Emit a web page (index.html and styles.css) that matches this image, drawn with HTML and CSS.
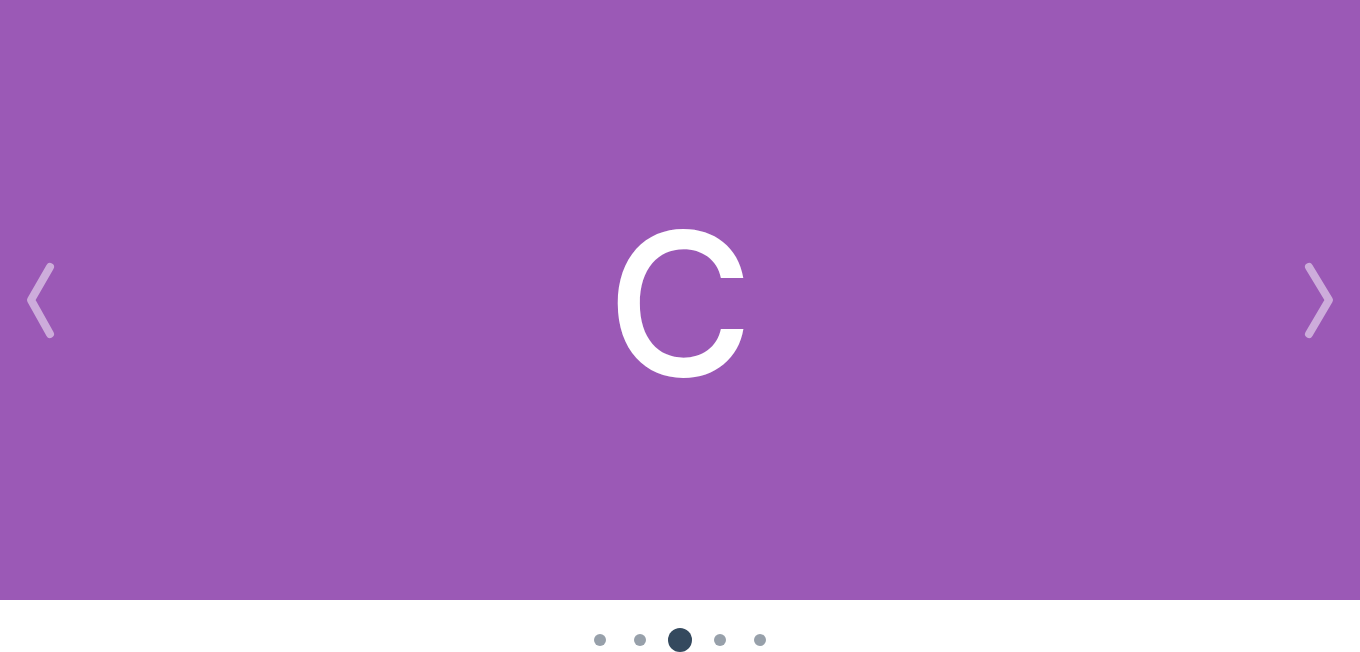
FILE: index.html
```html
<!DOCTYPE html>
<html>
<head>
<meta charset="utf-8">
<link rel="stylesheet" href="styles.css">
</head>
<body>
<div class="carousel">
  <div class="slide">
    <span class="letter">C</span>
    <button class="arrow arrow-prev" aria-label="Previous">
      <svg width="40" height="90" viewBox="0 0 40 90"><polyline points="30,12 11,45 30,79" fill="none" stroke="currentColor" stroke-width="8" stroke-linecap="round" stroke-linejoin="round"/></svg>
    </button>
    <button class="arrow arrow-next" aria-label="Next">
      <svg width="40" height="90" viewBox="0 0 40 90"><polyline points="9,12 29,45 9,79" fill="none" stroke="currentColor" stroke-width="8" stroke-linecap="round" stroke-linejoin="round"/></svg>
    </button>
  </div>
  <div class="dots">
    <span class="slot"><span class="dot"></span></span>
    <span class="slot"><span class="dot"></span></span>
    <span class="slot"><span class="dot active"></span></span>
    <span class="slot"><span class="dot"></span></span>
    <span class="slot"><span class="dot"></span></span>
  </div>
</div>
</body>
</html>
```
FILE: styles.css
```css
html, body {
  margin: 0;
  padding: 0;
  background: #ffffff;
}
body {
  font-family: "Liberation Sans", Arial, sans-serif;
}
.carousel {
  width: 1360px;
}
.slide {
  position: relative;
  height: 600px;
  background: #9b59b6;
  display: flex;
  align-items: center;
  justify-content: center;
}
.letter {
  color: #ffffff;
  font-family: Inter, "Liberation Sans", sans-serif;
  font-weight: 500;
  font-size: 200px;
  line-height: 1;
  margin-top: 6px;
}
.arrow {
  position: absolute;
  top: 255px;
  width: 40px;
  height: 90px;
  padding: 0;
  border: 0;
  background: none;
  color: rgba(255, 255, 255, 0.5);
  display: flex;
}
.arrow svg {
  overflow: visible;
}
.arrow-prev {
  left: 20px;
}
.arrow-next {
  left: 1300px;
}
.dots {
  height: 80px;
  display: flex;
  align-items: center;
  justify-content: center;
}
.slot {
  width: 40px;
  height: 24px;
  display: flex;
  align-items: center;
  justify-content: center;
}
.dot {
  width: 12px;
  height: 12px;
  border-radius: 50%;
  background: #97a0aa;
}
.dot.active {
  width: 24px;
  height: 24px;
  background: #34495e;
}
```
